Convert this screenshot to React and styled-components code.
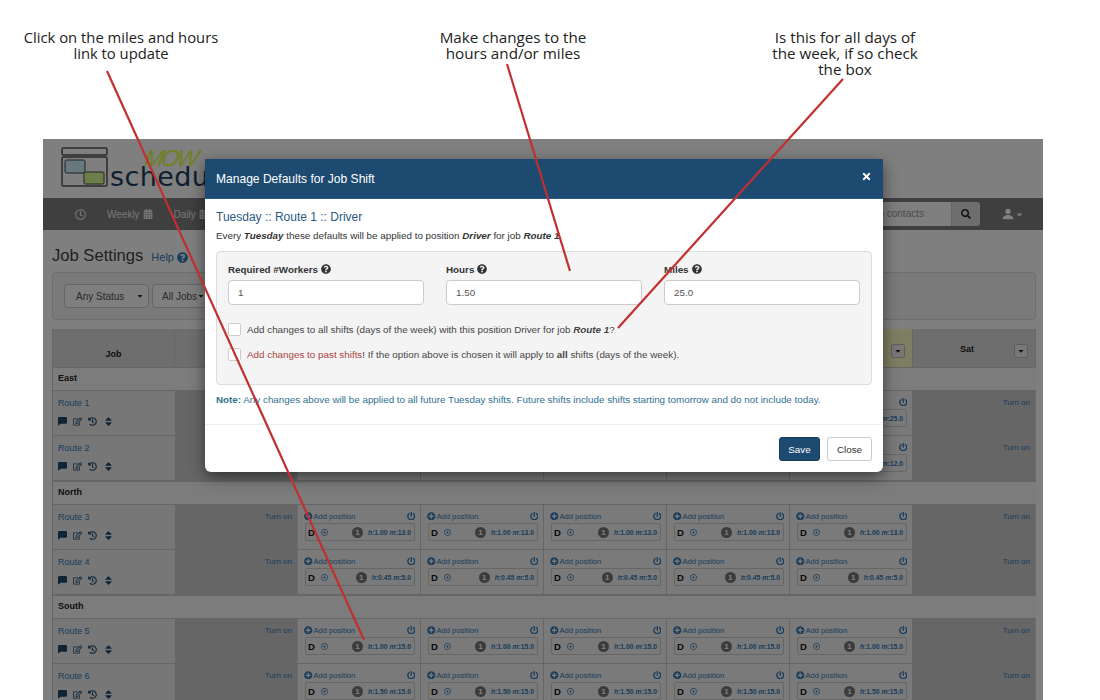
import React from 'react';
import styled, {createGlobalStyle} from 'styled-components';
import {
  FaCalendarAlt, FaQuestionCircle, FaSearch, FaTimes, FaPlusCircle, FaPowerOff,
  FaRegDotCircle, FaRegEdit, FaHistory, FaSort, FaCaretDown, FaRegClock,
} from 'react-icons/fa';
import {BsChatLeftFill, BsPersonFill} from 'react-icons/bs';

const DAYS = ['Sun', 'Mon', 'Tue', 'Wed', 'Thu', 'Fri', 'Sat'];
const OFF_DAYS = ['Sun', 'Sat'];

const groups = [
  {name: 'East', routes: [
    {name: 'Route 1', hours: '1.50', miles: '25.0'},
    {name: 'Route 2', hours: '1.00', miles: '12.0'},
  ]},
  {name: 'North', routes: [
    {name: 'Route 3', hours: '1.00', miles: '13.0'},
    {name: 'Route 4', hours: '0.45', miles: '5.0'},
  ]},
  {name: 'South', routes: [
    {name: 'Route 5', hours: '1.00', miles: '15.0'},
    {name: 'Route 6', hours: '1.50', miles: '15.0'},
  ]},
];

const notes = [
  {lines: ['Click on the miles and hours', 'link to update'], gap: 0, width: 200, size: 14.8},
  {lines: ['Make changes to the', 'hours and/or miles'], gap: 212, width: 160, size: 15.2},
  {lines: ['Is this for all days of', 'the week, if so check', 'the box'], gap: 172, width: 160, size: 15.2},
];

const GlobalStyle = createGlobalStyle`
  html, body {
    margin: 0;
    background: #fff;
  }
  body {
    font-family: "Liberation Sans", Arial, sans-serif;
    color: #333;
  }
  * {
    box-sizing: border-box;
  }
`;

const Page = styled.div`
  position: relative;
  width: 1100px;
  height: 700px;
  overflow: hidden;
`;

const NoteRow = styled.div`
  display: flex;
  height: 139px;
  padding: 29px 0 0 21px;
`;

const Note = styled.div`
  width: ${p => p.$width}px;
  margin-left: ${p => p.$gap}px;
  font-family: "Open Sans", sans-serif;
  font-size: ${p => p.$size}px;
  line-height: 16px;
  text-align: center;
  white-space: nowrap;
  color: #222;
`;

const Arrows = styled.svg`
  position: absolute;
  top: 0;
  left: 0;
  z-index: 5;
  pointer-events: none;
`;

const Screen = styled.div`
  position: relative;
  width: 1000px;
  height: 561px;
  margin-left: 43px;
  overflow: hidden;
  background: #fff;
`;

const Backdrop = styled.div`
  position: absolute;
  inset: 0;
  background: rgba(0, 0, 0, 0.5);
`;

const Brand = styled.div`
  display: flex;
  align-items: flex-end;
  height: 59px;
  padding: 0 0 11px 18px;
`;

const BrandName = styled.div`
  position: relative;
  margin-left: 1px;
  font-family: "DejaVu Sans", sans-serif;
  font-size: 27px;
  line-height: 21px;
  letter-spacing: 0.4px;
  color: #1a3f60;
`;

const BrandMow = styled.span`
  position: absolute;
  top: -21px;
  left: 35px;
  font-family: "Liberation Sans", sans-serif;
  font-size: 23px;
  line-height: 26px;
  font-style: italic;
  letter-spacing: -2.5px;
  transform: skewX(-10deg);
  -webkit-text-stroke: 0.3px #e4ff50;
  color: #e4ff50;
`;

const NavBar = styled.div`
  display: flex;
  align-items: center;
  height: 32px;
  padding-left: 32px;
  background: #7f7f7f;
  font-size: 10px;
`;

const NavItem = styled.span`
  display: flex;
  align-items: center;
  gap: 3px;
  margin-right: ${p => p.$gap}px;
  color: #eee;

  svg {
    font-size: ${p => p.$icon || 10}px;
  }
`;

const NavRight = styled.div`
  display: flex;
  align-items: center;
  margin-left: auto;
  padding-right: 19px;
`;

const SearchInput = styled.div`
  width: 122px;
  height: 24px;
  padding: 0 27px 0 0;
  line-height: 24px;
  font-size: 10px;
  text-align: right;
  color: #999;
  background: #fff;
  border-radius: 3px 0 0 3px;
`;

const SearchButton = styled.div`
  display: flex;
  align-items: center;
  justify-content: center;
  width: 29px;
  height: 24px;
  font-size: 10px;
  color: #222;
  background: #ddd;
  border-left: 1px solid #ccc;
  border-radius: 0 3px 3px 0;
`;

const UserMenu = styled.div`
  display: flex;
  align-items: center;
  margin-left: 21px;
  font-size: 14px;
  color: #fff;

  svg + svg {
    font-size: 9px;
  }
`;

const Content = styled.div`
  padding: 0 7px 0 9px;
`;

const TitleRow = styled.div`
  display: flex;
  align-items: baseline;
  gap: 8px;
  height: 42px;
  padding-top: 16px;
`;

const Title = styled.h1`
  margin: 0;
  font-size: 16.6px;
  font-weight: 400;
  line-height: 20px;
  color: #444;
`;

const HelpLink = styled.span`
  display: flex;
  align-items: center;
  gap: 3px;
  font-size: 11px;
  color: #337ab7;
`;

const FilterPanel = styled.div`
  display: flex;
  gap: 3px;
  height: 48px;
  margin-bottom: 9px;
  padding: 11px;
  background: #f5f5f5;
  border: 1px solid #ddd;
  border-radius: 4px;
`;

const FilterButton = styled.div`
  display: flex;
  align-items: center;
  justify-content: space-between;
  width: ${p => p.$width}px;
  height: 24px;
  padding: 0 4px 0 ${p => p.$pad}px;
  font-size: 10px;
  white-space: nowrap;
  color: #555;
  background: #fff;
  border: 1px solid #ccc;
  border-radius: 4px;

  svg {
    font-size: 8px;
    color: #333;
  }
`;

const Table = styled.div`
  display: grid;
  grid-template-columns: 122px repeat(7, 123px);
  border-left: 1px solid #ccc;
`;

const HeadCell = styled.div`
  position: relative;
  display: flex;
  justify-content: center;
  height: 38px;
  padding-top: ${p => p.$top}px;
  padding-right: ${p => p.$right || 0}px;
  font-size: 9px;
  font-weight: 700;
  color: #222;
  background: ${p => (p.$today ? '#fcfcc4' : '#ddd')};
  border-right: 1px solid #ccc;
`;

const HeadDrop = styled.span`
  position: absolute;
  top: 15px;
  right: 7px;
  display: flex;
  align-items: center;
  justify-content: center;
  width: 14px;
  height: 14px;
  font-size: 8px;
  color: #222;
  background: #eee;
  border: 1px solid #bbb;
  border-radius: 2px;
`;

const GroupRow = styled.div`
  grid-column: 1 / -1;
  height: 24px;
  padding-left: 5px;
  line-height: 21px;
  font-size: 9px;
  font-weight: 700;
  color: #222;
  background: #f9f9f9;
  border-top: 1px solid #ccc;
  border-bottom: 1px solid #ccc;
`;

const JobCell = styled.div`
  height: 45px;
  padding: 7px 5px 0;
  background: #efefef;
  border-bottom: 1px solid #ccc;
`;

const RouteName = styled.div`
  height: 11px;
  line-height: 11px;
  font-size: 9px;
  color: #337ab7;
`;

const JobIcons = styled.div`
  display: flex;
  align-items: center;
  gap: 6px;
  margin-top: 7px;
  font-size: 9px;
  color: #1c4a70;

  svg:last-child {
    font-size: 11px;
  }
`;

const OffCell = styled.div`
  height: 45px;
  padding: 7px 5px 0 0;
  line-height: 9px;
  font-size: 8px;
  text-align: right;
  color: #337ab7;
  background: #ccc;
  border-right: 1px solid #ddd;
  border-bottom: 1px solid #ccc;
`;

const DayCell = styled.div`
  height: 45px;
  padding: 6px 5px 0 7px;
  background: #f4f4f4;
  border-right: 1px solid #ccc;
  border-bottom: 1px solid #ccc;
`;

const DayTop = styled.div`
  display: flex;
  align-items: center;
  gap: 1px;
  height: 10px;
  margin-left: -1px;
  font-size: 7.6px;
  color: #337ab7;

  svg {
    font-size: 8.5px;
  }

  svg:last-child {
    margin-left: auto;
  }
`;

const PositionCard = styled.div`
  display: flex;
  align-items: center;
  height: 18px;
  margin-top: 2px;
  padding: 0 3px 0 2px;
  font-size: 7px;
  background: #f4f4f4;
  border: 1px solid #ccc;
  border-radius: 2px;
`;

const PositionCode = styled.b`
  font-size: 9.5px;
  color: #111;
`;

const BanIcon = styled(FaRegDotCircle)`
  margin-left: 6px;
  font-size: 7px;
  color: #337ab7;
`;

const CountBadge = styled.span`
  display: flex;
  align-items: center;
  justify-content: center;
  width: 11px;
  height: 11px;
  margin-left: auto;
  font-size: 8px;
  font-weight: 700;
  color: #fff;
  background: #777;
  border-radius: 50%;
`;

const HoursMiles = styled.span`
  margin-left: 5px;
  font-size: 6.8px;
  font-weight: 700;
  color: #337ab7;

  i {
    font-style: italic;
  }
`;

const Modal = styled.div`
  position: absolute;
  top: 20px;
  left: 162px;
  width: 678px;
  height: 313px;
  background: #fff;
  border-radius: 0 0 6px 6px;
  box-shadow: 0 5px 15px rgba(0, 0, 0, 0.5);
`;

const ModalHeader = styled.div`
  display: flex;
  align-items: center;
  justify-content: space-between;
  height: 40px;
  padding: 0 11px;
  font-size: 12.05px;
  color: #fff;
  background: #1c4a70;
  border-bottom: 1px solid #2a5a80;
`;

const CloseIcon = styled(FaTimes)`
  margin-bottom: 5px;
  font-size: 11px;
`;

const ModalBody = styled.div`
  height: 226px;
  padding: 10px 11px 0;
  border-bottom: 1px solid #eee;
`;

const ShiftTitle = styled.div`
  height: 16px;
  line-height: 16px;
  font-size: 12px;
  color: #2a5a85;
`;

const Lead = styled.p`
  margin: 5px 0 10px;
  height: 11px;
  line-height: 11px;
  font-size: 9.83px;
  color: #333;
`;

const EditPanel = styled.div`
  height: 134px;
  padding: 8px 11px 0;
  background: #f4f4f4;
  border: 1px solid #ddd;
  border-radius: 4px;
`;

const FieldRow = styled.div`
  display: grid;
  grid-template-columns: repeat(3, 196px);
  gap: 22px;
`;

const FieldLabel = styled.label`
  display: flex;
  align-items: center;
  gap: 3px;
  height: 20px;
  padding-bottom: 2px;
  font-size: 9.83px;
  font-weight: 700;
  color: #333;

  svg {
    font-size: 10px;
  }
`;

const FieldInput = styled.div`
  height: 25px;
  padding-left: 9px;
  line-height: 24px;
  font-size: 9.83px;
  color: #555;
  background: #fff;
  border: 1px solid #ccc;
  border-radius: 4px;
`;

const CheckRow = styled.div`
  display: flex;
  align-items: center;
  gap: 6px;
  height: 14px;
  margin-top: ${p => p.$top}px;
  font-size: 9.83px;
  color: #444;
`;

const CheckBox = styled.span`
  flex: none;
  width: 13px;
  height: 13px;
  background: #fff;
  border: 1px solid #ccc;
  border-radius: 2px;
`;

const PastLink = styled.span`
  color: #a94442;
`;

const NoteLine = styled.p`
  margin: 9px 0 0;
  line-height: 11px;
  font-size: 9.83px;
  color: #31708f;
`;

const ModalFooter = styled.div`
  display: flex;
  justify-content: flex-end;
  gap: 7px;
  padding: 12px 11px;
`;

const FootButton = styled.div`
  display: flex;
  align-items: center;
  justify-content: center;
  width: ${p => p.$width}px;
  height: 24px;
  font-size: 9.83px;
  color: ${p => (p.$primary ? '#fff' : '#333')};
  background: ${p => (p.$primary ? '#1c4a70' : '#fff')};
  border: 1px solid ${p => (p.$primary ? '#163b5a' : '#ccc')};
  border-radius: 3px;
`;

const LogoMark = () => (
  <svg width="48" height="40" viewBox="0 0 48 40">
    <rect x="1" y="1" width="45" height="7" rx="1.5" fill="#fff" stroke="#555" strokeWidth="1.5" />
    <rect x="1" y="10" width="45" height="29" rx="1.5" fill="#fff" stroke="#555" strokeWidth="1.5" />
    <rect x="4" y="13" width="20" height="13" rx="1.5" fill="#d0f0ff" stroke="#444" />
    <rect x="23" y="25" width="20" height="12" rx="1.5" fill="#d8ff94" stroke="#444" />
  </svg>
);

const PositionDay = ({hours, miles}) => (
  <DayCell>
    <DayTop>
      <FaPlusCircle />
      Add position
      <FaPowerOff />
    </DayTop>
    <PositionCard>
      <PositionCode>D</PositionCode>
      <BanIcon />
      <CountBadge>1</CountBadge>
      <HoursMiles><i>h</i>:{hours} <i>m</i>:{miles}</HoursMiles>
    </PositionCard>
  </DayCell>
);

const RouteRow = ({name, hours, miles}) => (
  <>
    <JobCell>
      <RouteName>{name}</RouteName>
      <JobIcons>
        <BsChatLeftFill />
        <FaRegEdit />
        <FaHistory />
        <FaSort />
      </JobIcons>
    </JobCell>
    {DAYS.map(day => (OFF_DAYS.includes(day)
      ? <OffCell key={day}>Turn on</OffCell>
      : <PositionDay key={day} hours={hours} miles={miles} />))}
  </>
);

const App = () => {
  return (
    <Page>
      <GlobalStyle />
      <NoteRow>
        {notes.map(({lines, gap, width, size}) => (
          <Note key={lines[0]} $gap={gap} $width={width} $size={size}>
            {lines.map(line => <div key={line}>{line}</div>)}
          </Note>
        ))}
      </NoteRow>
      <Screen>
        <Brand>
          <LogoMark />
          <BrandName>
            <BrandMow>MOW</BrandMow>
            schedule
          </BrandName>
        </Brand>
        <NavBar>
          <NavItem $gap={21} $icon={11}><FaRegClock /></NavItem>
          <NavItem $gap={21}>Weekly <FaCalendarAlt /></NavItem>
          <NavItem $gap={22}>Daily <FaCalendarAlt /></NavItem>
          <NavRight>
            <SearchInput>Search contacts</SearchInput>
            <SearchButton><FaSearch /></SearchButton>
            <UserMenu><BsPersonFill /><FaCaretDown /></UserMenu>
          </NavRight>
        </NavBar>
        <Content>
          <TitleRow>
            <Title>Job Settings</Title>
            <HelpLink>Help <FaQuestionCircle /></HelpLink>
          </TitleRow>
          <FilterPanel>
            <FilterButton $width={85} $pad={11}>Any Status <FaCaretDown /></FilterButton>
            <FilterButton $width={58} $pad={9}>All Jobs <FaCaretDown /></FilterButton>
          </FilterPanel>
          <Table>
            <HeadCell $top={20}>Job</HeadCell>
            {DAYS.map(day => (
              <HeadCell key={day} $top={15} $right={14} $today={day === 'Fri'}>
                {day}
                <HeadDrop><FaCaretDown /></HeadDrop>
              </HeadCell>
            ))}
            {groups.map(group => (
              <React.Fragment key={group.name}>
                <GroupRow>{group.name}</GroupRow>
                {group.routes.map(route => (
                  <RouteRow key={route.name} {...route} />
                ))}
              </React.Fragment>
            ))}
          </Table>
        </Content>
        <Backdrop />
        <Modal>
          <ModalHeader>
            Manage Defaults for Job Shift
            <CloseIcon />
          </ModalHeader>
          <ModalBody>
            <ShiftTitle>Tuesday :: Route 1 :: Driver</ShiftTitle>
            <Lead>
              Every <b><i>Tuesday</i></b> these defaults will be applied to position <b><i>Driver</i></b> for job <b><i>Route 1</i></b>
            </Lead>
            <EditPanel>
              <FieldRow>
                <div>
                  <FieldLabel>Required #Workers <FaQuestionCircle /></FieldLabel>
                  <FieldInput>1</FieldInput>
                </div>
                <div>
                  <FieldLabel>Hours <FaQuestionCircle /></FieldLabel>
                  <FieldInput>1.50</FieldInput>
                </div>
                <div>
                  <FieldLabel>Miles <FaQuestionCircle /></FieldLabel>
                  <FieldInput>25.0</FieldInput>
                </div>
              </FieldRow>
              <CheckRow $top={17}>
                <CheckBox />
                <span>Add changes to all shifts (days of the week) with this position Driver for job <b><i>Route 1</i></b>?</span>
              </CheckRow>
              <CheckRow $top={11}>
                <CheckBox />
                <span><PastLink>Add changes to past shifts</PastLink>! If the option above is chosen it will apply to <b>all</b> shifts (days of the week).</span>
              </CheckRow>
            </EditPanel>
            <NoteLine>
              <b>Note:</b> Any changes above will be applied to all future Tuesday shifts. Future shifts include shifts starting tomorrow and do not include today.
            </NoteLine>
          </ModalBody>
          <ModalFooter>
            <FootButton $primary $width={41}>Save</FootButton>
            <FootButton $width={45}>Close</FootButton>
          </ModalFooter>
        </Modal>
      </Screen>
      <Arrows width="1100" height="700" viewBox="0 0 1100 700">
        <g stroke="#c22f2f" strokeWidth="2.2" fill="none">
          <line x1="107" y1="71" x2="364" y2="640" />
          <line x1="507" y1="64" x2="570" y2="271" />
          <line x1="843" y1="79" x2="618" y2="328" />
        </g>
      </Arrows>
    </Page>
  );
};

export default App;
